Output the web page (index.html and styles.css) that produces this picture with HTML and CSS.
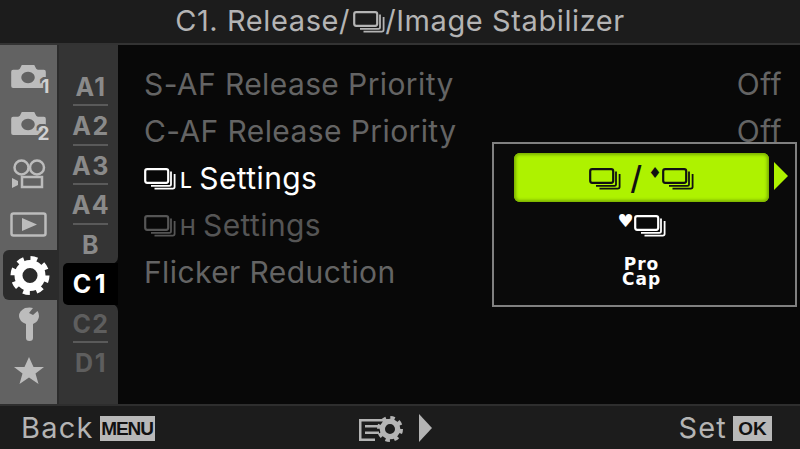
FILE: index.html
```html
<!DOCTYPE html>
<html lang="en">
<head>
    <meta charset="UTF-8">
    <title>C1. Release / Image Stabilizer</title>
    <link rel="stylesheet" href="styles.css">
</head>
<body>
    <svg class="defs" width="0" height="0">
        <symbol id="burst" viewBox="0 0 32 22">
            <rect x="1.2" y="1.2" width="23" height="13.6" rx="2" fill="none" stroke="currentColor" stroke-width="2.2"/>
            <path d="M27 3.5v12.7q0 1.6-1.6 1.6H7" fill="none" stroke="currentColor" stroke-width="1.8"/>
            <path d="M30.6 6v12.8q0 1.8-1.8 1.8H10.500" fill="none" stroke="currentColor" stroke-width="1.800"/>
        </symbol>
        <symbol id="camera" viewBox="0 0 36 26">
            <path fill-rule="evenodd" d="M2 6h5q1 0 2-1l2-4h13l2 4q1 1 2 1h6q2 0 2 2v15q0 2-2 2H2q-2 0-2-2V8q0-2 2-2zM17.500 8a7 6 0 1 0 .01 0z" fill="currentColor"/>
        </symbol>
        <symbol id="gear" viewBox="0 0 44 44">
            <circle cx="22" cy="22" r="13" fill="none" stroke="currentColor" stroke-width="9"/>
            <circle cx="22" cy="22" r="18" fill="none" stroke="currentColor" stroke-width="8" stroke-dasharray="7.130 7"/>
        </symbol>
    </svg>

    <div class="screen">
        <header class="title-bar">
            <span>C1. Release/</span>
            <svg class="burst title-burst"><use href="#burst"/></svg>
            <span>/Image Stabilizer</span>
        </header>

        <div class="body-row">
            <nav class="tabs">
                <div class="tab">
                    <span class="cam-icon"><svg class="cam"><use href="#camera"/></svg><b>1</b></span>
                </div>
                <div class="tab">
                    <span class="cam-icon"><svg class="cam"><use href="#camera"/></svg><b>2</b></span>
                </div>
                <div class="tab tab-low">
                    <svg class="tab-icon" width="36" height="30" viewBox="0 0 36 30">
                        <g fill="none" stroke="currentColor" stroke-width="2.500">
                            <circle cx="10.500" cy="8.500" r="7"/>
                            <circle cx="26" cy="8.500" r="7"/>
                            <rect x="11" y="18" width="20" height="10"/>
                        </g>
                        <path d="M1 19l6 3v4l-6 3z" fill="currentColor"/>
                    </svg>
                </div>
                <div class="tab tab-before-active">
                    <svg class="tab-icon" width="37" height="25" viewBox="0 0 37 25">
                        <rect x="1.500" y="1.500" width="34" height="22" rx="2" fill="none" stroke="currentColor" stroke-width="2.500"/>
                        <path d="M12 6l15 6.500-15 6.500z" fill="currentColor"/>
                    </svg>
                </div>
                <div class="tab tab-active">
                    <svg class="gear-big" preserveAspectRatio="none"><use href="#gear"/></svg>
                </div>
                <div class="tab">
                    <svg class="tab-icon" width="22" height="34" viewBox="0 0 22 34">
                        <path d="M7 1Q1 4 1 9t7 8v14q0 3 3.500 3T15 31V17q6-3 6-8 0-3-1.500-5L15 8l-4-2 4-5Q12 0 7 1z" fill="currentColor"/>
                    </svg>
                </div>
                <div class="tab">
                    <svg class="tab-icon" width="32" height="28" viewBox="0 0 32 28">
                        <path d="M16 0l4.500 10H31l-8.500 6.500L25.500 27 16 20.500 6.500 27l3-10.500L1 10h10.500z" fill="currentColor"/>
                    </svg>
                </div>
            </nav>

            <nav class="subtabs">
                <div class="subtab first">A1</div>
                <div class="subtab">A2</div>
                <div class="subtab">A3</div>
                <div class="subtab">A4</div>
                <div class="subtab no-line above-active">B</div>
                <div class="subtab subtab-active">C1</div>
                <div class="subtab dim below-active">C2</div>
                <div class="subtab dim no-line last">D1</div>
            </nav>

            <main class="menu">
                <div class="row dim">
                    <span>S-AF Release Priority</span><span>Off</span>
                </div>
                <div class="row dim">
                    <span>C-AF Release Priority</span><span>Off</span>
                </div>
                <div class="row current">
                    <span class="row-label">
                        <svg class="burst row-burst"><use href="#burst"/></svg><i>L</i>Settings
                    </span>
                </div>
                <div class="row dim darker">
                    <span class="row-label">
                        <svg class="burst row-burst"><use href="#burst"/></svg><i>H</i>Settings
                    </span>
                </div>
                <div class="row dim">
                    <span>Flicker Reduction</span>
                </div>

                <div class="popup">
                    <div class="option selected">
                        <svg class="burst opt-burst"><use href="#burst"/></svg>
                        <span class="slash">/</span>
                        <span class="mark">♦</span>
                        <svg class="burst opt-burst"><use href="#burst"/></svg>
                    </div>
                    <div class="option white">
                        <span class="mark heart">♥</span>
                        <svg class="burst opt-burst"><use href="#burst"/></svg>
                    </div>
                    <div class="option white procap">Pro<br>Cap</div>
                    <span class="more-arrow"></span>
                </div>
            </main>
        </div>

        <footer class="foot-bar">
            <div class="foot-group">
                <span>Back</span><span class="key key-menu">MENU</span>
            </div>
            <div class="foot-group foot-mid">
                <span class="list-gear">
                    <svg width="32" height="23" viewBox="0 0 32 23">
                        <path d="M0 0h30v2.500H0zM0 0h2.500v22H0zM0 19.500h16V22H0zM6 6h18v2.500H6zM6 12.500h14V15H6z" fill="currentColor"/>
                    </svg>
                    <svg class="small-gear"><use href="#gear"/></svg>
                </span>
                <span class="foot-arrow"></span>
            </div>
            <div class="foot-group">
                <span>Set</span><span class="key key-ok">OK</span>
            </div>
        </footer>
    </div>
</body>
</html>
```
FILE: styles.css
```css
* {
    box-sizing: border-box;
}
html, body {
    margin: 0;
    padding: 0;
    background: #080808;
}
body {
    font-family: Inter, "Liberation Sans", sans-serif;
    overflow: hidden;
}
.defs {
    position: absolute;
}
.screen {
    width: 800px;
    height: 449px;
    display: flex;
    flex-direction: column;
}

/* top and bottom bars */
.title-bar {
    height: 45px;
    flex: none;
    display: flex;
    align-items: center;
    justify-content: center;
    padding-bottom: 3px;
    background: #1c1c1c;
    border-bottom: 2px solid #333;
    color: #b4b4b4;
    font-size: 29px;
    letter-spacing: 0.6px;
    white-space: nowrap;
}
.title-burst {
    width: 32px;
    height: 22px;
    margin: 3px 0 0 3px;
}
.foot-bar {
    height: 45px;
    flex: none;
    display: flex;
    align-items: center;
    justify-content: space-between;
    padding: 0 28px 0 21px;
    background: #1c1c1c;
    border-top: 2px solid #2e2e2e;
    color: #b4b4b4;
    font-size: 29px;
    letter-spacing: 1.200px;
}
.foot-group {
    display: flex;
    align-items: center;
    gap: 6px;
}
.foot-mid {
    gap: 15px;
    margin-right: 41px;
}
.key {
    background: #b8b8b8;
    color: #111;
    font-family: "Liberation Sans", sans-serif;
    font-weight: 700;
    line-height: 1;
    display: block;
}
.key-menu {
    width: 55px;
    padding: 3px 0;
    font-size: 19px;
    letter-spacing: -1.100px;
    text-align: center;
    margin-top: 2px;
}
.key-ok {
    width: 39px;
    padding: 3px 0;
    font-size: 19px;
    letter-spacing: 0;
    text-align: center;
    margin-top: 2px;
}
.list-gear {
    position: relative;
    display: block;
    width: 45px;
    height: 28px;
}
.small-gear {
    position: absolute;
    left: 17px;
    top: 2px;
    width: 28px;
    height: 26px;
}
.foot-arrow {
    width: 0;
    height: 0;
    border-left: 13px solid #b4b4b4;
    border-top: 14px solid transparent;
    border-bottom: 14px solid transparent;
}

.body-row {
    flex: 1;
    display: flex;
    min-height: 0;
}

/* left column */
.tabs {
    width: 59px;
    flex: none;
    display: flex;
    flex-direction: column;
    padding-top: 7px;
    background: #626262;
    border-right: 2px solid #2b2b2b;
    color: #bcbcbc;
}
.tab {
    display: flex;
    align-items: center;
    justify-content: center;
    height: 47px;
}
.tab-low {
    padding-top: 9px;
}
.tab-before-active {
    height: 57px;
    padding-top: 6px;
}
.tab-active {
    height: 50px;
    margin-left: 3px;
    margin-right: -2px;
    border-radius: 6px 0 0 6px;
    background: #2b2b2b;
    color: #fff;
}
.gear-big {
    width: 44px;
    height: 39px;
    margin-right: 2px;
}
.cam-icon {
    position: relative;
    display: block;
    width: 38px;
    height: 24px;
    margin-left: 2px;
}
.cam {
    display: block;
    width: 35px;
    height: 25px;
}
.cam-icon b {
    position: absolute;
    right: -1px;
    bottom: -9px;
    color: #d0d0d0;
    font-size: 19px;
    line-height: 20px;
    text-shadow: -2px 0 #626262, -2px -2px #626262, 0 -2px #626262;
}

/* second column */
.subtabs {
    width: 59px;
    flex: none;
    display: flex;
    flex-direction: column;
    align-items: stretch;
    background: linear-gradient(90deg, #343434 6px, #080808 6px);
    color: #8a8a8a;
    font-size: 25px;
    font-weight: 700;
}
.subtab {
    position: relative;
    height: 39.400px;
    line-height: 40px;
    padding-left: 5px;
    text-align: center;
    letter-spacing: 1.500px;
    background: #343434;
}
.subtab.first {
    height: 61.400px;
    padding-top: 22px;
}
.subtab.last {
    flex: 1;
}
.subtab::after {
    content: "";
    position: absolute;
    left: 14px;
    right: 10px;
    bottom: 0;
    height: 2px;
    background: #5a5a5a;
}
.subtab.no-line::after,
.subtab-active::after {
    display: none;
}
.subtab.dim {
    color: #5e5e5e;
}
.above-active {
    border-radius: 0 0 7px 0;
}
.below-active {
    border-radius: 0 7px 0 0;
}
.subtab-active {
    margin-left: 4px;
    height: 42px;
    margin-top: -1px;
    margin-bottom: -1px;
    padding-left: 1px;
    line-height: 43px;
    background: #000;
    color: #fff;
    border-radius: 5px 0 0 5px;
    letter-spacing: 3.500px;
    z-index: 1;
}

/* settings list */
.menu {
    position: relative;
    flex: 1;
    padding: 16px 18px 0 26px;
    font-size: 30px;
    line-height: 47px;
    color: #fff;
    letter-spacing: 0.4px;
}
.row {
    display: flex;
    justify-content: space-between;
    height: 47px;
    white-space: nowrap;
}
.row.dim {
    color: #646464;
}
.row.darker {
    color: #555;
}
.row-label {
    display: flex;
    align-items: center;
}
.row-label i {
    font-style: normal;
    font-size: 21px;
    font-weight: 500;
    margin: 4px 7px 0 4px;
}
.row-burst {
    width: 32px;
    height: 22px;
}

/* popup with the drive options */
.popup {
    position: absolute;
    left: 374px;
    top: 97px;
    width: 305px;
    height: 165px;
    padding: 9px 26px 0 20px;
    background: #0a0a0a;
    border: 2px solid #808080;
    letter-spacing: 0;
}
.option {
    display: flex;
    align-items: center;
    justify-content: center;
    height: 46px;
}
.option.white {
    color: #fff;
}
.selected {
    height: 49px;
    border-radius: 6px;
    background: #aef200;
    box-shadow: inset 0 0 3px 2px #7bb000;
    color: #111;
}
.opt-burst {
    width: 32px;
    height: 22px;
    margin-top: 3px;
}
.option.white .opt-burst {
    margin-top: 1px;
}
.slash {
    font-size: 32px;
    font-weight: 500;
    margin: 0 6px 0 9px;
    line-height: 1;
}
.mark {
    font-family: "DejaVu Sans", sans-serif;
    font-size: 15px;
    margin: -9px 0 0 0;
    line-height: 1;
}
.heart {
    font-size: 18px;
}
.procap {
    font-family: "DejaVu Sans", sans-serif;
    font-weight: 700;
    font-size: 17px;
    line-height: 15px;
    text-align: center;
    letter-spacing: 1px;
    height: 48px;
}
.more-arrow {
    position: absolute;
    left: 280px;
    top: 18px;
    width: 0;
    height: 0;
    border-left: 14px solid #aef200;
    border-top: 14px solid transparent;
    border-bottom: 14px solid transparent;
}
```
